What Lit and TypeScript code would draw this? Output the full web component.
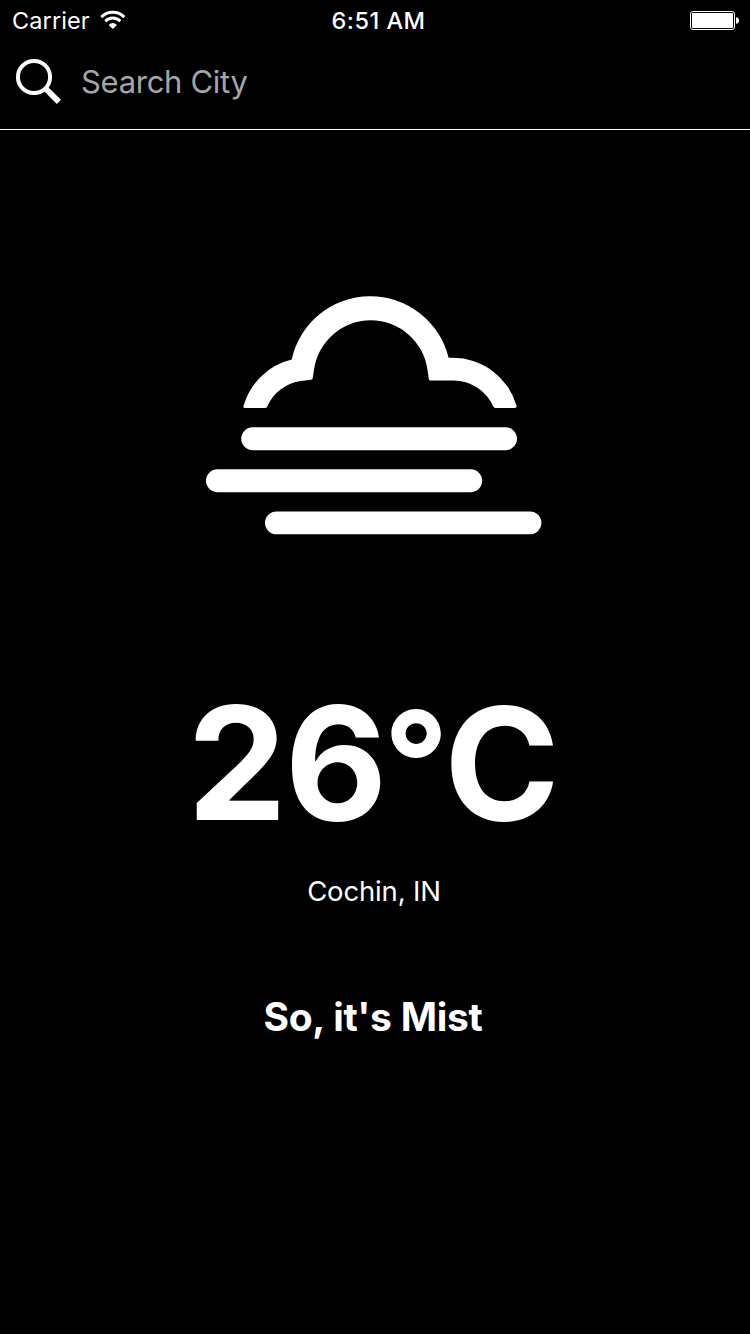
import { LitElement, html, css } from "lit";
import { customElement, property } from "lit/decorators.js";

@customElement("status-bar")
class StatusBar extends LitElement {
  static styles = css`
    :host {
      display: grid;
      grid-template-columns: 1fr auto 1fr;
      height: 40px;
      padding: 0 11px 0 12px;
      font-size: 23.5px;
      line-height: 42px;
    }
    .left {
      display: flex;
    }
    .carrier {
      letter-spacing: 0.1px;
      width: 88px;
    }
    .time {
      padding-left: 6px;
      font-weight: 550;
      font-size: 23.5px;
      letter-spacing: 0.5px;
    }
    .battery {
      justify-self: end;
    }
    svg {
      display: block;
    }
  `;
  render() {
    return html`
      <div class="left">
        <span class="carrier">Carrier</span>
        <svg width="26" height="40" viewBox="0 0 26 40" fill="none" stroke="#fff">
          <path d="M1.3 17.1A16 16 0 0 1 24.3 17.1" stroke-width="3" />
          <path d="M5.3 21.2A10.4 10.4 0 0 1 20.3 21.2" stroke-width="2.9" />
          <path d="M8.6 24.9Q12.8 21.2 17 24.9L12.8 29Z" fill="#fff" stroke="none" />
        </svg>
      </div>
      <span class="time">6:51 AM</span>
      <svg class="battery" width="49" height="40" viewBox="0 0 49 40">
        <rect x="0.5" y="11.5" width="44" height="18" rx="2.5" fill="none" stroke="#fff" />
        <rect x="2" y="13" width="41" height="15" rx="1" fill="#fff" />
        <path d="M46 17.2Q49 17.5 49 20.5T46 23.8Z" fill="#fff" />
      </svg>
    `;
  }
}

@customElement("search-bar")
class SearchBar extends LitElement {
  static styles = css`
    :host {
      display: flex;
      box-sizing: border-box;
      height: 90px;
      padding-left: 15px;
      border-bottom: 1px solid #fff;
    }
    svg {
      display: block;
      margin-top: 18px;
    }
    .hint {
      margin-left: 18px;
      font-size: 31px;
      letter-spacing: -0.3px;
      line-height: 83px;
      color: #a5a5a5;
    }
  `;
  render() {
    return html`
      <svg width="48" height="48" viewBox="0 0 48 48" fill="none" stroke="#fff">
        <circle cx="19" cy="19" r="16.1" stroke-width="4" />
        <path d="M30 30L43.9 43.9" stroke-width="5.8" />
      </svg>
      <span class="hint">Search City</span>
    `;
  }
}

@customElement("mist-icon")
class MistIcon extends LitElement {
  static styles = css`
    :host,
    svg {
      display: block;
    }
  `;
  render() {
    return html`
      <svg width="340" height="240" viewBox="205 295 340 240" fill="#fff">
        <path
          d="M245 408Q243 408 243.6 405.8A66 66 0 0 1 291.7 359.6A80.5 80.5 0 0 1 448.6 357.8H453A66 66 0 0 1 516.5 405.8Q517 408 515 408H495.4Q494 408 493.3 406.6A43.4 43.4 0 0 0 453 380.5H430.4Q429 380.5 428.8 379L427.6 370.5A57.3 57.3 0 0 0 313.9 370.5L312.7 378.2Q312.5 379.6 311 379.8L301 381A43.4 43.4 0 0 0 267.3 406.4Q266.6 408 265 408Z"
        />
        <rect x="241.2" y="427.3" width="275.8" height="22.9" rx="11.45" />
        <rect x="206" y="469.3" width="276.2" height="22.9" rx="11.45" />
        <rect x="265" y="511.4" width="276.4" height="22.9" rx="11.45" />
      </svg>
    `;
  }
}

@customElement("app-root")
class AppRoot extends LitElement {
  @property({ type: Number }) temperature = 26;
  @property() city = "Cochin, IN";
  @property() summary = "So, it's Mist";

  static styles = css`
    :host {
      display: flex;
      flex-direction: column;
      box-sizing: border-box;
      height: 1334px;
      background: #000;
      color: #fff;
      font-family: Inter, "Liberation Sans", sans-serif;
      white-space: nowrap;
    }
    .weather {
      display: flex;
      flex-direction: column;
      align-items: center;
      padding-top: 165px;
    }
    .temperature {
      margin-top: 128px;
      padding-right: 3px;
      font-size: 158px;
      font-weight: 700;
      letter-spacing: -2px;
      line-height: 200px;
    }
    .degree {
      margin: 0 -4.5px 0 -2px;
      font-size: 142px;
      letter-spacing: 0;
      line-height: 1;
      vertical-align: 7px;
    }
    .unit {
      font-size: 156px;
      letter-spacing: 0;
      line-height: 1;
    }
    .city {
      margin-top: 8px;
      padding-right: 2px;
      font-size: 27.5px;
      letter-spacing: -0.15px;
      line-height: 40px;
    }
    .summary {
      margin-top: 80px;
      padding-right: 4px;
      font-size: 39px;
      font-weight: 700;
      letter-spacing: -0.35px;
      word-spacing: 0.5px;
      line-height: 52px;
    }
  `;
  render() {
    return html`
      <status-bar></status-bar>
      <search-bar></search-bar>
      <main class="weather">
        <mist-icon></mist-icon>
        <div class="temperature">${this.temperature}<span class="degree">°</span><span class="unit">C</span></div>
        <div class="city">${this.city}</div>
        <div class="summary">${this.summary}</div>
      </main>
    `;
  }
}
